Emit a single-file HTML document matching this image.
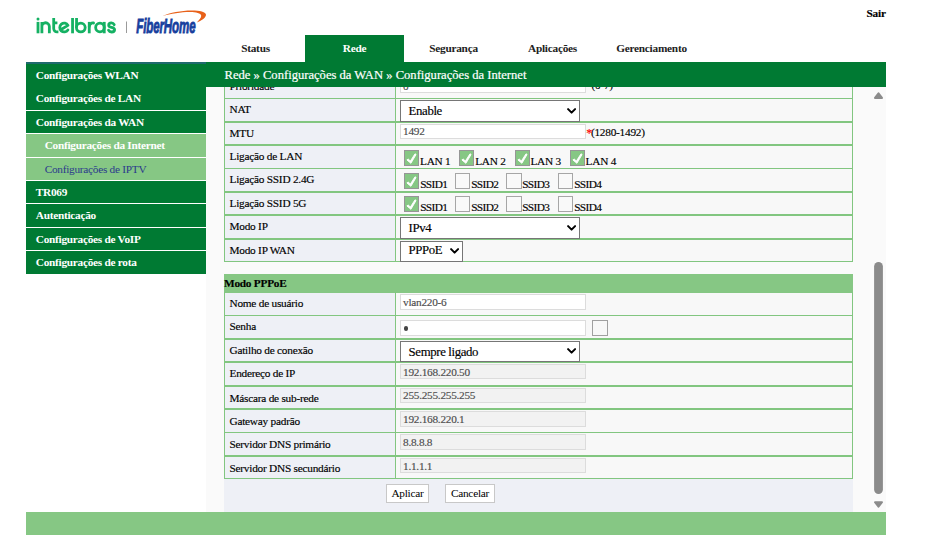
<!DOCTYPE html>
<html><head><meta charset="utf-8"><title>Configurações da Internet</title>
<style>
*{box-sizing:border-box;}
html,body{margin:0;padding:0;}
body{width:928px;height:559px;overflow:hidden;background:#fff;font-family:"Liberation Serif",serif;font-size:11.3px;letter-spacing:-0.24px;color:#000;position:relative;}
.a{position:absolute;}
.t{position:absolute;white-space:nowrap;line-height:1;-webkit-text-stroke:0.15px;}
.nav{position:absolute;top:35px;height:27px;font-weight:bold;text-align:center;width:99px;color:#222;}
.nav span{position:absolute;left:0;width:100%;top:7.7px;line-height:1;}
.si{position:absolute;left:26px;width:180px;background:#007a33;}
.si span{position:absolute;line-height:1;color:#fff;font-weight:bold;white-space:nowrap;letter-spacing:-0.27px;}
.hl{position:absolute;left:224px;width:629px;background:#82c680;}
.inp{position:absolute;left:400px;width:186px;height:15px;border:1px solid #dcdcdc;background:#fff;}
.dis{background:#f2f2f2;}
.it{position:absolute;left:2.1px;top:0.8px;line-height:1;color:#4c4c4c;white-space:nowrap;letter-spacing:-0.28px;-webkit-text-stroke:0.15px;}
.sel{position:absolute;left:400px;height:21.5px;border:1px solid #767676;background:#fff;border-radius:0;}
.sel span{position:absolute;left:7.6px;top:4px;font-size:12.8px;letter-spacing:-0.37px;line-height:1;white-space:nowrap;-webkit-text-stroke:0.15px;}
.sel svg{position:absolute;right:3.3px;top:7.0px;}
.cb{position:absolute;width:15px;height:16px;border:1px solid #a6a6a6;background:#f9f9f9;}
.cb.on{background:#86c784;border-color:#969696;}
.btn{position:absolute;top:484px;height:19px;border:1px solid #c8c8c8;background:#fff;text-align:center;}
.btn span{position:absolute;left:0;width:100%;top:3.2px;line-height:1;}
</style></head><body>
<svg class="a" style="left:30px;top:5px" width="190" height="40" viewBox="30 5 190 40">
<g fill="none" stroke="#15b163" stroke-width="2.8" stroke-linecap="butt" stroke-linejoin="round">
<path d="M38 21.9V33.3"/>
<path d="M41.9 21.9V33.3M41.9 26.5a3.72 3.72 0 0 1 7.45 0V33.3"/>
<path d="M53.7 18V28.6a3.3 3.3 0 0 0 3.3 3.3H58.4M52.3 22.8H57.4"/>
<path d="M72.55 18V33.3"/>
<path d="M76.55 18V27.55"/><circle cx="80.8" cy="27.55" r="4.4"/>
<path d="M89.25 21.9V33.3"/>
<circle cx="99.95" cy="27.5" r="4.3"/><path d="M104.25 21.9V33.3"/>
</g>
<g fill="none" stroke="#15b163" stroke-width="2.8" stroke-linecap="round" stroke-linejoin="round">
<path d="M61.1 29.5L68.0 25.4A4.4 4.4 0 1 0 67.9 29.9"/>
<path d="M89.25 26.6a3.7 3.7 0 0 1 4.3-3.6"/>
<path d="M114.2 24.7C113.6 23.5 112.6 22.9 111.4 22.9C109.8 22.9 108.7 23.9 108.7 25.2C108.7 28.3 114.6 26.6 114.6 29.8C114.6 31.1 113.3 32 111.6 32C110.2 32 109.1 31.4 108.5 30.2"/>
</g>
<circle cx="38" cy="19.05" r="1.5" fill="#15b163"/>
<rect x="126" y="21.5" width="1" height="11.5" fill="#9a9a9a"/>
<path d="M162 16.2C170 12.6 182 10.4 192 10.5C199 10.6 206.5 11.8 206 15C205.6 18 201.5 20.5 196.8 22.5C199.3 19.8 201.4 17.4 201.2 15.7C200.9 13.2 196 12.2 190 12.1C182 12 171 13.7 162 16.2Z" fill="#e8611a"/>
<text x="0" y="0" transform="translate(136.2 32.5) scale(0.571 1)" font-family="Liberation Sans" font-weight="bold" font-style="italic" font-size="20.3" fill="#173f9e" stroke="#173f9e" stroke-width="0.9">FiberHome</text>
</svg>
<div class="t" style="right:42.3px;top:7.6px;font-weight:bold;">Sair</div>
<div class="nav" style="left:206px;"><span>Status</span></div>
<div class="nav" style="left:305px;background:#007a33;color:#fff;"><span>Rede</span></div>
<div class="nav" style="left:404px;"><span>Segurança</span></div>
<div class="nav" style="left:503px;"><span>Aplicações</span></div>
<div class="nav" style="left:602px;"><span>Gerenciamento</span></div>
<div class="si" style="top:62.4px;height:23.4px;"><span style="left:9.8px;top:7.20px;">Configurações WLAN</span></div>
<div class="si" style="top:85.8px;height:24.2px;"><span style="left:9.8px;top:7.00px;">Configurações de LAN</span></div>
<div class="si" style="top:111px;height:22.4px;"><span style="left:9.8px;top:6.00px;">Configurações da WAN</span></div>
<div class="si" style="top:134.4px;height:22.6px;background:#86c784;"><span style="left:18.7px;top:5.20px;">Configurações da Internet</span></div>
<div class="si" style="top:158px;height:22px;background:#86c784;"><span style="left:18.7px;top:5.50px;font-weight:normal;color:#2b3a8c;">Configurações de IPTV</span></div>
<div class="si" style="top:181px;height:22.2px;"><span style="left:9.8px;top:6.00px;">TR069</span></div>
<div class="si" style="top:204.2px;height:22.8px;"><span style="left:9.8px;top:5.70px;">Autenticação</span></div>
<div class="si" style="top:228px;height:22.3px;"><span style="left:9.8px;top:6.00px;">Configurações de VoIP</span></div>
<div class="si" style="top:251.3px;height:23.0px;"><span style="left:9.8px;top:6.00px;">Configurações de rota</span></div>
<div class="a" style="left:26px;top:62px;width:180px;height:2px;background:#1f6a6d"></div>
<div class="a" style="left:206px;top:62px;width:680px;height:450px;background:#fafafa"></div>
<div class="a" style="left:224px;top:70px;width:172px;height:192px;background:#eef0f6"></div>
<div class="a" style="left:396px;top:70px;width:457px;height:192px;background:#f8f8f8"></div>
<div class="a" style="left:224px;top:274px;width:172px;height:205px;background:#eef0f6"></div>
<div class="a" style="left:396px;top:274px;width:457px;height:205px;background:#f8f8f8"></div>
<div class="a" style="left:224px;top:479px;width:629px;height:33px;background:#eef0f6"></div>
<div class="a" style="left:224px;top:274px;width:629px;height:19px;background:#86c784"></div>
<div class="t" style="left:224px;top:278.3px;font-weight:bold;">Modo PPPoE</div>
<div class="hl" style="top:98px;height:1px"></div>
<div class="hl" style="top:121px;height:2px"></div>
<div class="hl" style="top:144px;height:2px"></div>
<div class="hl" style="top:168px;height:1px"></div>
<div class="hl" style="top:191px;height:2px"></div>
<div class="hl" style="top:214px;height:2px"></div>
<div class="hl" style="top:238px;height:2px"></div>
<div class="hl" style="top:261px;height:1px"></div>
<div class="hl" style="top:315px;height:1px"></div>
<div class="hl" style="top:338px;height:2px"></div>
<div class="hl" style="top:361px;height:2px"></div>
<div class="hl" style="top:385px;height:2px"></div>
<div class="hl" style="top:408px;height:2px"></div>
<div class="hl" style="top:432px;height:1px"></div>
<div class="hl" style="top:455px;height:2px"></div>
<div class="hl" style="top:478px;height:1px"></div>
<div class="a" style="left:224px;top:70px;width:1px;height:192px;background:#82c680"></div>
<div class="a" style="left:224px;top:292px;width:1px;height:187px;background:#82c680"></div>
<div class="a" style="left:395px;top:70px;width:1px;height:192px;background:#82c680"></div>
<div class="a" style="left:395px;top:292px;width:1px;height:187px;background:#82c680"></div>
<div class="a" style="left:852px;top:70px;width:1px;height:192px;background:#82c680"></div>
<div class="a" style="left:852px;top:292px;width:1px;height:187px;background:#82c680"></div>
<div class="t" style="left:229.5px;top:80.9px">Prioridade</div>
<div class="t" style="left:229.5px;top:103.6px">NAT</div>
<div class="t" style="left:229.5px;top:127.6px">MTU</div>
<div class="t" style="left:229.5px;top:150.8px">Ligação de LAN</div>
<div class="t" style="left:229.5px;top:173.5px">Ligação SSID 2.4G</div>
<div class="t" style="left:229.5px;top:197.5px">Ligação SSID 5G</div>
<div class="t" style="left:229.5px;top:220.5px">Modo IP</div>
<div class="t" style="left:229.5px;top:244.6px">Modo IP WAN</div>
<div class="t" style="left:229.5px;top:297.9px">Nome de usuário</div>
<div class="t" style="left:229.5px;top:321.3px">Senha</div>
<div class="t" style="left:229.5px;top:345.3px">Gatilho de conexão</div>
<div class="t" style="left:229.5px;top:368.3px">Endereço de IP</div>
<div class="t" style="left:229.5px;top:392.9px">Máscara de sub-rede</div>
<div class="t" style="left:229.5px;top:415.6px">Gateway padrão</div>
<div class="t" style="left:229.5px;top:438.9px">Servidor DNS primário</div>
<div class="t" style="left:229.5px;top:462.6px">Servidor DNS secundário</div>
<div class="inp" style="top:77.5px;height:15px;"><span class="it" style="top:2.0px">0</span></div>
<div class="t" style="left:591.5px;top:80.1px">(0-7)</div>
<div class="sel" style="top:100px;width:180px;height:21.5px"><span style="top:3.9px">Enable</span><svg width="9.2" height="6.5" viewBox="0 0 10 7"><path d="M1.2 1.2L5 5L8.8 1.2" fill="none" stroke="#000" stroke-width="2.2" stroke-linecap="round" stroke-linejoin="round"/></svg></div>
<div class="inp" style="top:124px;height:15px;"><span class="it" style="top:0.8px">1492</span></div>
<div class="t" style="left:586.2px;top:126.0px"><span style="color:#f00;font-size:12px;letter-spacing:-1.3px;position:relative;top:0.5px">*</span>(1280-1492)</div>
<div class="cb on" style="left:404px;top:150px;width:15px"><svg width="13" height="13.5" viewBox="0 0 13 13.5" style="position:absolute;left:0.3px;top:0.3px"><path d="M1.9 9.0L3.0 7.9L5.4 10.0L10.0 2.8L11.1 3.5L5.9 12.3Z" fill="#fff" stroke="#fff" stroke-width="0.9" stroke-linejoin="round"/></svg></div>
<div class="t" style="left:420.0px;top:155.6px">LAN 1</div>
<div class="cb on" style="left:459px;top:150px;width:15px"><svg width="13" height="13.5" viewBox="0 0 13 13.5" style="position:absolute;left:0.3px;top:0.3px"><path d="M1.9 9.0L3.0 7.9L5.4 10.0L10.0 2.8L11.1 3.5L5.9 12.3Z" fill="#fff" stroke="#fff" stroke-width="0.9" stroke-linejoin="round"/></svg></div>
<div class="t" style="left:475.2px;top:155.6px">LAN 2</div>
<div class="cb on" style="left:515px;top:150px;width:15px"><svg width="13" height="13.5" viewBox="0 0 13 13.5" style="position:absolute;left:0.3px;top:0.3px"><path d="M1.9 9.0L3.0 7.9L5.4 10.0L10.0 2.8L11.1 3.5L5.9 12.3Z" fill="#fff" stroke="#fff" stroke-width="0.9" stroke-linejoin="round"/></svg></div>
<div class="t" style="left:530.4px;top:155.6px">LAN 3</div>
<div class="cb on" style="left:570px;top:150px;width:15px"><svg width="13" height="13.5" viewBox="0 0 13 13.5" style="position:absolute;left:0.3px;top:0.3px"><path d="M1.9 9.0L3.0 7.9L5.4 10.0L10.0 2.8L11.1 3.5L5.9 12.3Z" fill="#fff" stroke="#fff" stroke-width="0.9" stroke-linejoin="round"/></svg></div>
<div class="t" style="left:585.6px;top:155.6px">LAN 4</div>
<div class="cb on" style="left:404px;top:173px;width:15px"><svg width="13" height="13.5" viewBox="0 0 13 13.5" style="position:absolute;left:0.3px;top:0.3px"><path d="M1.9 9.0L3.0 7.9L5.4 10.0L10.0 2.8L11.1 3.5L5.9 12.3Z" fill="#fff" stroke="#fff" stroke-width="0.9" stroke-linejoin="round"/></svg></div>
<div class="t" style="left:420.2px;top:178.9px;letter-spacing:-0.62px">SSID1</div>
<div class="cb" style="left:455px;top:173px;width:15px"></div>
<div class="t" style="left:471.2px;top:178.9px;letter-spacing:-0.62px">SSID2</div>
<div class="cb" style="left:506px;top:173px;width:16px"></div>
<div class="t" style="left:522.2px;top:178.9px;letter-spacing:-0.62px">SSID3</div>
<div class="cb" style="left:558px;top:173px;width:15px"></div>
<div class="t" style="left:574.2px;top:178.9px;letter-spacing:-0.62px">SSID4</div>
<div class="cb on" style="left:404px;top:196px;width:15px"><svg width="13" height="13.5" viewBox="0 0 13 13.5" style="position:absolute;left:0.3px;top:0.3px"><path d="M1.9 9.0L3.0 7.9L5.4 10.0L10.0 2.8L11.1 3.5L5.9 12.3Z" fill="#fff" stroke="#fff" stroke-width="0.9" stroke-linejoin="round"/></svg></div>
<div class="t" style="left:420.2px;top:202.4px;letter-spacing:-0.62px">SSID1</div>
<div class="cb" style="left:455px;top:196px;width:15px"></div>
<div class="t" style="left:471.2px;top:202.4px;letter-spacing:-0.62px">SSID2</div>
<div class="cb" style="left:506px;top:196px;width:16px"></div>
<div class="t" style="left:522.2px;top:202.4px;letter-spacing:-0.62px">SSID3</div>
<div class="cb" style="left:558px;top:196px;width:15px"></div>
<div class="t" style="left:574.2px;top:202.4px;letter-spacing:-0.62px">SSID4</div>
<div class="sel" style="top:217px;width:180px;height:21.5px"><span style="top:4.4px">IPv4</span><svg width="9.2" height="6.5" viewBox="0 0 10 7"><path d="M1.2 1.2L5 5L8.8 1.2" fill="none" stroke="#000" stroke-width="2.2" stroke-linecap="round" stroke-linejoin="round"/></svg></div>
<div class="sel" style="top:241px;width:63px;height:20.5px"><span style="top:2.4px">PPPoE</span><svg style="top:5.9px" width="9.2" height="6.5" viewBox="0 0 10 7"><path d="M1.2 1.2L5 5L8.8 1.2" fill="none" stroke="#000" stroke-width="2.2" stroke-linecap="round" stroke-linejoin="round"/></svg></div>
<div class="inp" style="top:294px;height:16px;"><span class="it" style="top:1.7000000000000002px">vlan220-6</span></div>
<div class="inp" style="top:320px;height:16px"><div style="position:absolute;left:2.5px;top:5.4px;width:4.4px;height:4.4px;border-radius:50%;background:#444"></div></div>
<div class="a" style="left:592px;top:320px;width:16px;height:16px;border:1px solid #a0a0a0;background:#f8f8f8"></div>
<div class="sel" style="top:341px;width:180px;height:20.5px"><span style="top:4.3px">Sempre ligado</span><svg style="top:5.9px" width="9.2" height="6.5" viewBox="0 0 10 7"><path d="M1.2 1.2L5 5L8.8 1.2" fill="none" stroke="#000" stroke-width="2.2" stroke-linecap="round" stroke-linejoin="round"/></svg></div>
<div class="inp dis" style="top:364.4px;height:15px;"><span class="it" style="top:1.5px">192.168.220.50</span></div>
<div class="inp dis" style="top:387.5px;height:15px;"><span class="it" style="top:1.4px">255.255.255.255</span></div>
<div class="inp dis" style="top:411px;height:16px;"><span class="it" style="top:1.9000000000000001px">192.168.220.1</span></div>
<div class="inp dis" style="top:434px;height:16px;"><span class="it" style="top:2.0px">8.8.8.8</span></div>
<div class="inp dis" style="top:458px;height:15px;"><span class="it" style="top:1.8px">1.1.1.1</span></div>
<div class="btn" style="left:386px;width:43px"><span>Aplicar</span></div>
<div class="btn" style="left:445px;width:50px"><span>Cancelar</span></div>
<div class="a" style="left:206px;top:62px;width:680px;height:24.7px;background:#007a33"></div>
<div class="t" style="left:224.5px;top:68.9px;font-size:12.6px;color:#fff;letter-spacing:0;-webkit-text-stroke:0.2px">Rede » Configurações da WAN » Configurações da Internet</div>
<svg class="a" style="left:870px;top:88px" width="16" height="424" viewBox="870 88 16 424"><g fill="#8b8b8b"><path d="M878.5 93.4L882.0 97.9H875.0Z" stroke="#8b8b8b" stroke-width="2" stroke-linejoin="round"/><rect x="874.1" y="262" width="8.8" height="232" rx="4.4"/><path d="M878.5 506.7L875.0 502.2H882.0Z" stroke="#8b8b8b" stroke-width="2" stroke-linejoin="round"/></g></svg>
<div class="a" style="left:26px;top:512px;width:860px;height:23px;background:#86c784"></div>
</body></html>
